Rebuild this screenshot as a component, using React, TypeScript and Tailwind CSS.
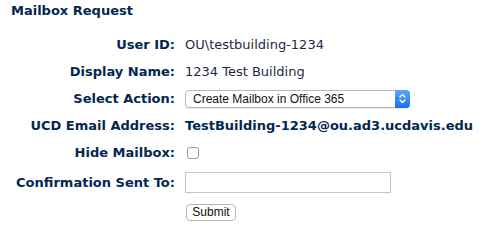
const navy = "text-[#022851]";

function Label({ children }: { children: React.ReactNode }) {
  return (
    <div className={`flex items-center justify-end font-bold ${navy} whitespace-nowrap`}>
      {children}
    </div>
  );
}

function Value({ children }: { children: React.ReactNode }) {
  return <div className="flex items-center whitespace-nowrap">{children}</div>;
}

function SelectBox() {
  return (
    <div className="flex h-[18px] w-[225px] items-stretch rounded-[4px] border border-[#b8b8b8] bg-white shadow-[0_1px_1px_rgba(0,0,0,0.08)]">
      <div className="flex flex-1 items-center pl-[7px] font-['Liberation_Sans',Arial,sans-serif] text-[12px] text-[#111]">
        Create Mailbox in Office 365
      </div>
      <div className="-my-px -mr-px flex w-[15px] items-center justify-center rounded-r-[4px] bg-gradient-to-b from-[#5aa5fb] to-[#1b6ef3]">
        <svg width="7" height="11" viewBox="0 0 7 11" fill="none" stroke="white" strokeWidth="1.4" strokeLinecap="round" strokeLinejoin="round">
          <path d="M1 4 L3.5 1.5 L6 4" />
          <path d="M1 7 L3.5 9.5 L6 7" />
        </svg>
      </div>
    </div>
  );
}

export default function App() {
  return (
    <div className="h-[226px] w-[494px] bg-white font-['DejaVu_Sans',Verdana,sans-serif] text-[13px]">
      <div className={`h-[22px] pl-[11px] font-bold leading-[22px] ${navy}`}>Mailbox Request</div>
      <div className="mt-[10px] grid grid-cols-[175px_1fr] grid-rows-[26px_27px_27px_27px_27px_33px_26px] gap-x-[10px]">
        <Label>User ID:</Label>
        <Value>
          <span className="text-[#1d2a44]">OU\testbuilding-1234</span>
        </Value>

        <Label>Display Name:</Label>
        <Value>
          <span className="text-[#1d2a44]">1234 Test Building</span>
        </Value>

        <Label>Select Action:</Label>
        <Value>
          <SelectBox />
        </Value>

        <Label>UCD Email Address:</Label>
        <Value>
          <span className={`font-bold ${navy}`}>TestBuilding-1234@ou.ad3.ucdavis.edu</span>
        </Value>

        <Label>Hide Mailbox:</Label>
        <Value>
          <span className="ml-[2px] block h-[12px] w-[12px] rounded-[3px] border border-[#9a9a9a] bg-white" />
        </Value>

        <Label>Confirmation Sent To:</Label>
        <Value>
          <input
            type="text"
            className="h-[21px] w-[206px] border border-[#c6c6c6] bg-white px-1 outline-none"
          />
        </Value>

        <div />
        <Value>
          <button className="ml-px h-[17px] w-[50px] rounded-[4px] border border-[#b5b5b5] bg-white font-['Liberation_Sans',Arial,sans-serif] text-[12px] leading-none text-[#111]">
            Submit
          </button>
        </Value>
      </div>
    </div>
  );
}
